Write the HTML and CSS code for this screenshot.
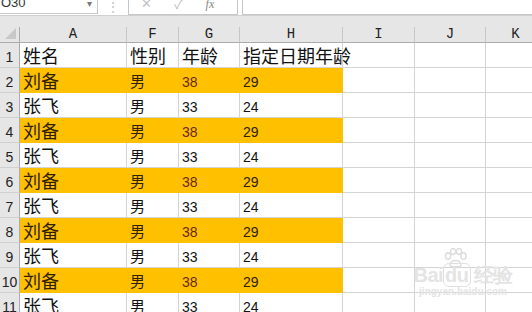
FILE: index.html
```html
<!DOCTYPE html>
<html lang="zh">
<head>
  <meta charset="UTF-8" />
  <title>Sheet</title>
  <link rel="stylesheet" href="styles.css">
</head>
<body>
  <div class="formula-bar">
    <div class="name-box"><span class="name-text">O30</span><span class="dropdown">&#9662;</span></div>
    <div class="grip">&#8942;</div>
    <div class="fx-buttons">
      <span class="fx-btn cancel">&#10005;</span>
      <span class="fx-btn ok">&#10003;</span>
      <span class="fx-btn fx">fx</span>
    </div>
    <div class="formula-input"></div>
  </div>

  <div class="gap-strip"></div>

  <div class="sheet">
    <div class="hdr corner"><span class="tri"></span></div>
    <div class="hdr col">A</div>
    <div class="hdr col">F</div>
    <div class="hdr col">G</div>
    <div class="hdr col">H</div>
    <div class="hdr col">I</div>
    <div class="hdr col">J</div>
    <div class="hdr col">K</div>

    <div class="rownum">1</div>
    <div class="cell big">姓名</div>
    <div class="cell big">性别</div>
    <div class="cell big">年龄</div>
    <div class="cell big wide">指定日期年龄</div>
    <div class="cell"></div><div class="cell"></div><div class="cell"></div>

    <div class="rownum">2</div>
    <div class="cell big fill">刘备</div>
    <div class="cell mid fill">男</div>
    <div class="cell num fill red">38</div>
    <div class="cell num fill">29</div>
    <div class="cell"></div><div class="cell"></div><div class="cell"></div>

    <div class="rownum">3</div>
    <div class="cell big">张飞</div>
    <div class="cell mid">男</div>
    <div class="cell num">33</div>
    <div class="cell num">24</div>
    <div class="cell"></div><div class="cell"></div><div class="cell"></div>

    <div class="rownum">4</div>
    <div class="cell big fill">刘备</div>
    <div class="cell mid fill">男</div>
    <div class="cell num fill red">38</div>
    <div class="cell num fill">29</div>
    <div class="cell"></div><div class="cell"></div><div class="cell"></div>

    <div class="rownum">5</div>
    <div class="cell big">张飞</div>
    <div class="cell mid">男</div>
    <div class="cell num">33</div>
    <div class="cell num">24</div>
    <div class="cell"></div><div class="cell"></div><div class="cell"></div>

    <div class="rownum">6</div>
    <div class="cell big fill">刘备</div>
    <div class="cell mid fill">男</div>
    <div class="cell num fill red">38</div>
    <div class="cell num fill">29</div>
    <div class="cell"></div><div class="cell"></div><div class="cell"></div>

    <div class="rownum">7</div>
    <div class="cell big">张飞</div>
    <div class="cell mid">男</div>
    <div class="cell num">33</div>
    <div class="cell num">24</div>
    <div class="cell"></div><div class="cell"></div><div class="cell"></div>

    <div class="rownum">8</div>
    <div class="cell big fill">刘备</div>
    <div class="cell mid fill">男</div>
    <div class="cell num fill red">38</div>
    <div class="cell num fill">29</div>
    <div class="cell"></div><div class="cell"></div><div class="cell"></div>

    <div class="rownum">9</div>
    <div class="cell big">张飞</div>
    <div class="cell mid">男</div>
    <div class="cell num">33</div>
    <div class="cell num">24</div>
    <div class="cell"></div><div class="cell"></div><div class="cell"></div>

    <div class="rownum">10</div>
    <div class="cell big fill">刘备</div>
    <div class="cell mid fill">男</div>
    <div class="cell num fill red">38</div>
    <div class="cell num fill">29</div>
    <div class="cell"></div><div class="cell"></div><div class="cell"></div>

    <div class="rownum">11</div>
    <div class="cell big">张飞</div>
    <div class="cell mid">男</div>
    <div class="cell num">33</div>
    <div class="cell num">24</div>
    <div class="cell"></div><div class="cell"></div><div class="cell"></div>
  </div>

  <div class="watermark">
    <svg class="paw" width="26" height="20" viewBox="0 0 26 20">
      <g fill="none" stroke="#dcdcdc" stroke-width="1.4">
        <ellipse cx="6" cy="8" rx="2.6" ry="3.2"/>
        <ellipse cx="11" cy="3.5" rx="2.6" ry="3"/>
        <ellipse cx="17" cy="3.5" rx="2.6" ry="3"/>
        <ellipse cx="21.5" cy="8" rx="2.6" ry="3.2"/>
        <path d="M8 17 C8 11 19 11 19 17 C19 19.5 8 19.5 8 17 Z"/>
      </g>
    </svg>
    <div class="wm-title">Bai<span class="wm-du">du</span>经验</div>
    <div class="wm-url">jingyan.baidu.com</div>
  </div>
</body>
</html>
```

FILE: styles.css
```css
:root {
  --grid: #d4d4d4;
  --hdr-bg: #e6e6e6;
  --hdr-line: #c6c6c6;
  --gold: #ffc000;
}

* {
  box-sizing: border-box;
  margin: 0;
  padding: 0;
}

body {
  width: 532px;
  height: 312px;
  overflow: hidden;
  background: #fff;
  font-family: "Noto Sans CJK SC", "Noto Sans", sans-serif;
  color: #111;
  position: relative;
}

/* formula bar */
.formula-bar {
  display: flex;
  height: 16px;
  border-bottom: 1px solid #d0d0d0;
  background: #fff;
}

.name-box {
  width: 98px;
  height: 14px;
  border-right: 1px solid #c6c6c6;
  border-bottom: 1px solid #c6c6c6;
  display: flex;
  justify-content: space-between;
  overflow: hidden;
}

.name-text {
  font-family: "Liberation Sans", sans-serif;
  font-size: 13px;
  line-height: 13px;
  margin-top: -4px;
  padding-left: 1px;
  color: #333;
}

.dropdown {
  font-size: 10px;
  line-height: 10px;
  margin-top: -2px;
  margin-right: 5px;
  color: #777;
}

.grip {
  width: 30px;
  text-align: center;
  font-size: 12px;
  line-height: 12px;
  color: #bbb;
}

.fx-buttons {
  width: 110px;
  height: 15px;
  border-left: 1px solid #c6c6c6;
  border-right: 1px solid #c6c6c6;
  border-bottom: 1px solid #c6c6c6;
  display: flex;
  overflow: hidden;
}

.fx-btn {
  color: #c4c4c4;
  line-height: 10px;
  margin-top: -2px;
}

.cancel {
  font-size: 13px;
  margin-left: 12px;
}

.ok {
  font-size: 14px;
  margin-left: 22px;
}

.fx {
  font-family: "Liberation Serif", serif;
  font-style: italic;
  font-size: 12px;
  color: #888;
  margin-left: 22px;
  margin-top: -1px;
}

.formula-input {
  flex: 1;
  margin-left: 4px;
  border-left: 1px solid #c6c6c6;
  border-bottom: 1px solid #c6c6c6;
  height: 15px;
}

.gap-strip {
  height: 11px;
  background: var(--hdr-bg);
}

/* grid */
.sheet {
  display: grid;
  grid-template-columns: 20px 107px 52px 61px 103px 72px 71px 60px;
  grid-template-rows: 16px;
  grid-auto-rows: 25px;
}

.hdr {
  background: var(--hdr-bg);
  border-right: 1px solid var(--hdr-line);
  border-bottom: 1px solid #ababab;
}

.corner {
  position: relative;
  border-right-color: #ababab;
}

.tri {
  position: absolute;
  right: 3px;
  bottom: 3px;
  width: 0;
  height: 0;
  border-left: 11px solid transparent;
  border-bottom: 11px solid #c8c8c8;
}

.col {
  font-family: "Liberation Mono", monospace;
  font-size: 14px;
  line-height: 15px;
  text-align: center;
  color: #222;
}

.rownum {
  background: var(--hdr-bg);
  border-right: 1px solid #ababab;
  border-bottom: 1px solid #d0d0d0;
  font-family: "Liberation Sans", sans-serif;
  font-size: 14px;
  line-height: 15px;
  color: #222;
  display: flex;
  align-items: flex-end;
  justify-content: center;
  padding-bottom: 2px;
}

.cell {
  border-right: 1px solid var(--grid);
  border-bottom: 1px solid var(--grid);
  display: flex;
  align-items: flex-end;
  padding-left: 3px;
  white-space: nowrap;
  overflow: visible;
}

.big {
  font-size: 18px;
  line-height: 20px;
  padding-bottom: 2px;
}

.wide {
  position: relative;
  z-index: 1;
}

.mid {
  font-size: 15px;
  line-height: 18px;
  padding-bottom: 2px;
}

.num {
  font-family: "Liberation Sans", sans-serif;
  font-size: 14px;
  line-height: 15px;
  padding-bottom: 2px;
}

.fill {
  background: var(--gold);
  border-color: var(--gold);
  color: #2e2000;
}

.red {
  color: #6a2810;
}

/* faint watermark over the grid */
.watermark {
  position: absolute;
  left: 408px;
  top: 248px;
  width: 110px;
  text-align: center;
  color: #e4e4e4;
  font-family: "Liberation Sans", sans-serif;
  white-space: nowrap;
}

.paw {
  display: block;
  margin: 0 0 -4px 34px;
}

.wm-title {
  font-size: 20px;
  font-weight: 700;
  line-height: 22px;
  letter-spacing: -0.5px;
}

.wm-du {
  border: 1.5px solid #e0e0e0;
  border-radius: 6px;
  padding: 0 1px;
  margin-right: 3px;
}

.wm-url {
  font-size: 10px;
  line-height: 12px;
  font-weight: 700;
}
```
